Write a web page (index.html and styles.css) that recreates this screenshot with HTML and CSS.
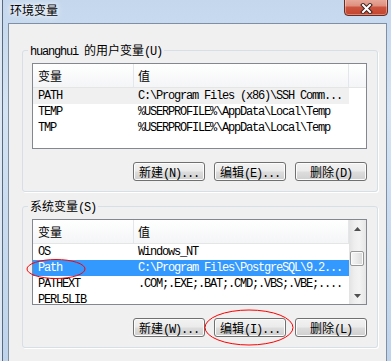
FILE: index.html
```html
<!DOCTYPE html>
<html lang="zh-CN">
<head>
    <meta charset="UTF-8">
    <meta name="viewport" content="width=device-width, initial-scale=1.0">
    <title>环境变量</title>
    <link rel="stylesheet" href="styles.css">
</head>
<body>
    <div class="window">
        <div class="titlebar">
            <span class="title cn">环境变量</span>
            <div class="close-btn">
                <svg width="13" height="11" viewBox="0 0 13 11">
                    <path d="M3 2 L10 9 M10 2 L3 9" stroke="#3b2320" stroke-width="4" stroke-linecap="square"/>
                    <path d="M3 2 L10 9 M10 2 L3 9" stroke="#fff" stroke-width="2" stroke-linecap="square"/>
                </svg>
            </div>
        </div>

        <div class="client">
            <!-- user variables -->
            <div class="group">
                <div class="group-title">huanghui <span class="cn">的用户变量</span>(U)</div>
                <div class="list">
                    <div class="list-head">
                        <div class="col-name cn">变量</div>
                        <div class="col-value cn">值</div>
                        <div class="col-fill"></div>
                    </div>
                    <div class="row inactive">
                        <div class="col-name">PATH</div>
                        <div class="col-value">C:\Program Files (x86)\SSH Comm...</div>
                    </div>
                    <div class="row">
                        <div class="col-name">TEMP</div>
                        <div class="col-value">%USERPROFILE%\AppData\Local\Temp</div>
                    </div>
                    <div class="row">
                        <div class="col-name">TMP</div>
                        <div class="col-value">%USERPROFILE%\AppData\Local\Temp</div>
                    </div>
                </div>
                <div class="buttons">
                    <button class="btn"><span class="cn">新建</span>(N)...</button>
                    <button class="btn"><span class="cn">编辑</span>(E)...</button>
                    <button class="btn"><span class="cn">删除</span>(D)</button>
                </div>
            </div>

            <!-- system variables -->
            <div class="group">
                <div class="group-title"><span class="cn">系统变量</span>(S)</div>
                <div class="list scroll">
                    <div class="list-body">
                        <div class="list-head">
                            <div class="col-name cn">变量</div>
                            <div class="col-value cn">值</div>
                        </div>
                        <div class="row">
                            <div class="col-name">OS</div>
                            <div class="col-value">Windows_NT</div>
                        </div>
                        <div class="row active">
                            <div class="col-name">Path</div>
                            <div class="col-value">C:\Program Files\PostgreSQL\9.2...</div>
                        </div>
                        <div class="row">
                            <div class="col-name">PATHEXT</div>
                            <div class="col-value">.COM;.EXE;.BAT;.CMD;.VBS;.VBE;....</div>
                        </div>
                        <div class="row">
                            <div class="col-name">PERL5LIB</div>
                            <div class="col-value"></div>
                        </div>
                    </div>
                    <div class="scrollbar">
                        <div class="sb-btn">
                            <svg width="7" height="4" viewBox="0 0 7 4"><path d="M0 4 L3.5 0 L7 4Z" fill="#505050"/></svg>
                        </div>
                        <div class="sb-track"><div class="sb-thumb"></div></div>
                        <div class="sb-btn">
                            <svg width="7" height="4" viewBox="0 0 7 4"><path d="M0 0 L7 0 L3.5 4Z" fill="#505050"/></svg>
                        </div>
                    </div>
                </div>
                <div class="buttons">
                    <button class="btn"><span class="cn">新建</span>(W)...</button>
                    <button class="btn"><span class="cn">编辑</span>(I)...</button>
                    <button class="btn"><span class="cn">删除</span>(L)</button>
                </div>
            </div>
        </div>
    </div>

    <!-- red hand-drawn marks -->
    <svg class="marks" width="391" height="361" viewBox="0 0 391 361">
        <ellipse cx="56" cy="269" rx="29" ry="9.5" fill="none" stroke="#f00" stroke-width="1"/>
        <ellipse cx="249" cy="327.5" rx="44" ry="17.5" fill="none" stroke="#f00" stroke-width="1"/>
    </svg>
</body>
</html>
```

FILE: styles.css
```css
* {
    box-sizing: border-box;
}
body {
    position: relative;
    margin: 0;
    width: 391px;
    height: 361px;
    overflow: hidden;
    background: #dde8f4;
    font-family: "Liberation Mono", "Noto Sans CJK SC", monospace;
    font-size: 12px;
    letter-spacing: -1.2px;
    color: #000;
}
.cn {
    font-family: "Noto Sans CJK SC", sans-serif;
    font-size: 12px;
    letter-spacing: 0;
}
.window {
    height: 361px;
    margin-left: 2px;
    border-left: 1px solid #5a6a7d;
    background: linear-gradient(180deg, #c4d7ed 0%, #d5e4f4 30%, #c9dcf0 60%, #bfd4eb 100%);
    display: flex;
    flex-direction: column;
}
.titlebar {
    height: 23px;
    flex: none;
    display: flex;
    justify-content: space-between;
    align-items: flex-start;
}
.title {
    padding: 2px 0 0 7px;
    line-height: 16px;
    text-shadow: 0 0 4px #fff, 0 0 8px #fff;
}
.close-btn {
    width: 44px;
    height: 19px;
    margin: -3px 3px 0 0;
    border: 1px solid #6b2b21;
    border-radius: 0 0 4px 4px;
    background: linear-gradient(180deg, #eab0a3 0%, #df917f 45%, #cb5540 55%, #c4432c 100%);
    box-shadow: inset 0 0 0 1px rgba(255, 255, 255, 0.35);
    display: flex;
    align-items: center;
    justify-content: center;
    padding-top: 3px;
}
.client {
    flex: 1;
    margin: 0 4px 0 5px;
    border: 1px solid #7f90a4;
    border-bottom: 0;
    background: #f0f0f0;
    padding: 26px 8px 0 13px;
}
.group {
    border: 1px solid #d5dfe5;
    border-radius: 3px;
    box-shadow: 1px 1px 0 #fff;
    padding: 0 10px 10px 9px;
}
.group + .group {
    margin-top: 14px;
}
.group-title {
    width: fit-content;
    height: 12px;
    margin: -7px 0 0 -4px;
    padding: 0 2px;
    line-height: 12px;
    background: #f0f0f0;
    white-space: nowrap;
}
.list {
    margin-top: 7px;
    height: 86px;
    border: 1px solid #828790;
    background: #fff;
    overflow: hidden;
}
.list.scroll {
    display: flex;
}
.list-body {
    width: 316px;
    overflow: hidden;
}
.list-head {
    display: flex;
    height: 24px;
    line-height: 23px;
    border-bottom: 1px solid #e5e5e5;
    background: linear-gradient(180deg, #ffffff, #f4f5f7);
}
.list-head .col-name {
    width: 101px;
    padding-left: 5px;
    border-right: 1px solid #e3e6ea;
}
.list-head .col-value {
    width: 215px;
    padding-left: 4px;
    border-right: 1px solid #e3e6ea;
}
.list-head .col-fill {
    flex: 1;
}
.row {
    display: flex;
    width: 316px;
    height: 16px;
    line-height: 16px;
    white-space: nowrap;
}
.row .col-name {
    width: 101px;
    padding-left: 5px;
    overflow: hidden;
}
.row .col-value {
    width: 215px;
    padding-left: 4px;
    overflow: hidden;
}
.row.inactive {
    background: #f0f0f0;
}
.row.active {
    background: #3399ff;
    color: #fff;
}
.scrollbar {
    width: 17px;
    display: flex;
    flex-direction: column;
    background: linear-gradient(90deg, #e2e2e2, #eeeeee 30%, #f3f3f3 60%, #e6e6e6);
}
.sb-btn {
    height: 17px;
    display: flex;
    align-items: center;
    justify-content: center;
}
.sb-track {
    flex: 1;
}
.sb-thumb {
    height: 15px;
    margin: 14px 2px 0 1px;
    border: 1px solid #979797;
    border-radius: 2px;
    background: linear-gradient(90deg, #f6f6f6, #e9e9e9 50%, #d9d9d9);
    box-shadow: inset 0 0 0 1px #fbfbfb;
}
.buttons {
    display: flex;
    justify-content: flex-end;
    gap: 9px;
    margin-top: 13px;
}
.btn {
    width: 72px;
    height: 19px;
    padding: 0;
    border: 1px solid #707070;
    border-radius: 3px;
    background: linear-gradient(180deg, #f2f2f2 0%, #ebebeb 48%, #dddddd 52%, #cfcfcf 100%);
    box-shadow: inset 0 0 0 1px #fcfcfc;
    font: inherit;
    letter-spacing: inherit;
    line-height: 17px;
    color: #000;
    white-space: nowrap;
}
.marks {
    position: absolute;
    top: 0;
    left: 0;
    pointer-events: none;
}
```
